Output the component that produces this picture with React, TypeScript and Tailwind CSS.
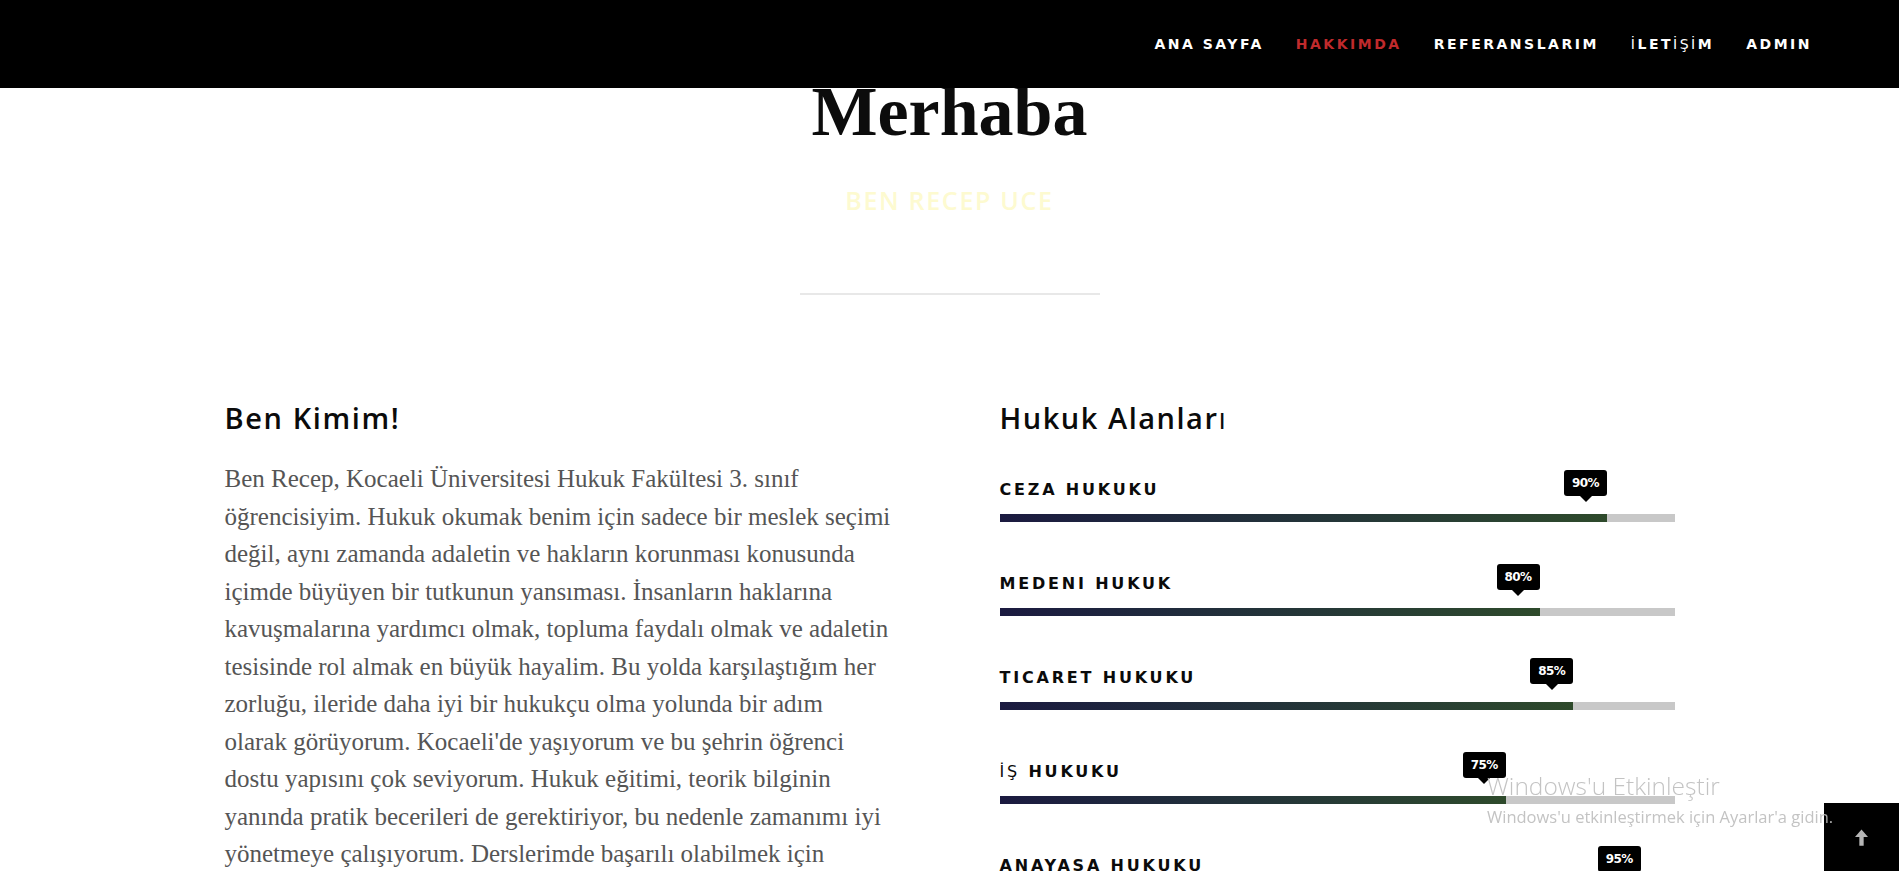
import React from "react";

const navItems = [
  { label: "ANA SAYFA" },
  { label: "HAKKIMDA", active: true },
  { label: "REFERANSLARIM" },
  { label: "İLETİŞİM" },
  { label: "ADMIN" },
];

const skills = [
  { name: "CEZA HUKUKU", pct: 90 },
  { name: "MEDENI HUKUK", pct: 80 },
  { name: "TICARET HUKUKU", pct: 85 },
  { name: "İŞ HUKUKU", pct: 75 },
  { name: "ANAYASA HUKUKU", pct: 95 },
];

const lines = [
  "Ben Recep, Kocaeli Üniversitesi Hukuk Fakültesi 3. sınıf",
  "öğrencisiyim. Hukuk okumak benim için sadece bir meslek seçimi",
  "değil, aynı zamanda adaletin ve hakların korunması konusunda",
  "içimde büyüyen bir tutkunun yansıması. İnsanların haklarına",
  "kavuşmalarına yardımcı olmak, topluma faydalı olmak ve adaletin",
  "tesisinde rol almak en büyük hayalim. Bu yolda karşılaştığım her",
  "zorluğu, ileride daha iyi bir hukukçu olma yolunda bir adım",
  "olarak görüyorum. Kocaeli'de yaşıyorum ve bu şehrin öğrenci",
  "dostu yapısını çok seviyorum. Hukuk eğitimi, teorik bilginin",
  "yanında pratik becerileri de gerektiriyor, bu nedenle zamanımı iyi",
  "yönetmeye çalışıyorum. Derslerimde başarılı olabilmek için",
  "düzenli çalışıyor ve her fırsatta kendimi geliştirmeye gayret ediyorum.",
];

// İ / Ş / ı fall back to a thinner face in the original, mimic that
function Fallback({ text }: { text: string }) {
  return (
    <>
      {Array.from(text).map((ch, i) =>
        "İŞı".includes(ch) ? (
          <span key={i} className="font-normal">
            {ch}
          </span>
        ) : (
          <React.Fragment key={i}>{ch}</React.Fragment>
        )
      )}
    </>
  );
}

function SkillBar({ name, pct }: { name: string; pct: number }) {
  return (
    <div className="relative">
      <div className="font-['DejaVu_Sans',sans-serif] font-bold text-[16px] leading-[20px] tracking-[2.8px] text-[#0b0b0b]">
        <Fallback text={name} />
      </div>
      <div
        className="absolute top-[-10px] w-[43px] h-[26px] rounded-[3px] bg-black flex items-center justify-center"
        style={{ left: `calc(${pct}% - 43px)` }}
      >
        <span className="font-['DejaVu_Sans',sans-serif] font-bold text-[12px] tracking-[-0.5px] text-white">
          {pct}%
        </span>
        <span className="absolute bottom-[-6px] left-1/2 -translate-x-1/2 w-0 h-0 border-l-[6px] border-r-[6px] border-t-[6px] border-l-transparent border-r-transparent border-t-black" />
      </div>
      <div className="mt-[14px] h-[8px] bg-[#c8c8c8]">
        <div
          className="h-full bg-gradient-to-r from-[#1b1a40] to-[#2e4a2b]"
          style={{ width: `${pct}%` }}
        />
      </div>
    </div>
  );
}

export default function App() {
  return (
    <div className="min-h-screen bg-white overflow-hidden">
      <nav className="relative z-10 h-[88px] bg-black flex items-center justify-end gap-[32px] pr-[87px]">
        {navItems.map((item) => (
          <a
            key={item.label}
            href="#"
            className={`font-['DejaVu_Sans',sans-serif] font-bold text-[14px] tracking-[2.5px] ${
              item.active ? "text-[#c02a2c]" : "text-white"
            }`}
          >
            <Fallback text={item.label} />
          </a>
        ))}
      </nav>

      <section className="flex flex-col items-center">
        <h1 className="font-['Liberation_Serif',serif] font-bold text-[70px] leading-[47px] text-[#0c0c0c]">
          Merhaba
        </h1>
        <p className="mt-[50px] font-['Open_Sans',sans-serif] font-semibold text-[25px] leading-[30px] tracking-[1.7px] text-[#fdfad0]">
          BEN RECEP UCE
        </p>
        <div className="mt-[78px] w-[300px] h-[2px] bg-[#e8e8e8]" />
      </section>

      <section className="mx-auto mt-[105px] w-[1450px] grid grid-cols-2 gap-[100px]">
        <div>
          <h2 className="font-['Open_Sans',sans-serif] font-semibold text-[29px] leading-[36px] tracking-[1.6px] text-[#0b0b0b]">
            Ben Kimim!
          </h2>
          <p className="mt-[24px] font-['Liberation_Serif',serif] text-[25px] leading-[37.5px] text-[#555] whitespace-nowrap">
            {lines.map((l, i) => (
              <React.Fragment key={i}>
                {l}
                <br />
              </React.Fragment>
            ))}
          </p>
        </div>
        <div>
          <h2 className="font-['Open_Sans',sans-serif] font-semibold text-[29px] leading-[36px] tracking-[1.5px] text-[#0b0b0b]">
            <Fallback text="Hukuk Alanları" />
          </h2>
          <div className="mt-[44px] flex flex-col gap-[52px]">
            {skills.map((s) => (
              <SkillBar key={s.name} name={s.name} pct={s.pct} />
            ))}
          </div>
        </div>
      </section>

      <button className="fixed right-0 bottom-0 w-[75px] h-[68px] bg-black flex items-center justify-center">
        <svg width="13" height="17" viewBox="0 0 12 15">
          <path d="M6 0 L12 7 L8 7 L8 15 L4 15 L4 7 L0 7 Z" fill="#b5b5b5" />
        </svg>
      </button>

      <div className="fixed left-[1487px] top-[770px] z-20 pointer-events-none font-['Open_Sans',sans-serif] text-[#bcbcbc]/90">
        <div className="text-[24.5px] leading-[32px] font-light">Windows'u Etkinleştir</div>
        <div className="text-[16.5px] leading-[24px] mt-[3px]">
          Windows'u etkinleştirmek için Ayarlar'a gidin.
        </div>
      </div>
    </div>
  );
}
